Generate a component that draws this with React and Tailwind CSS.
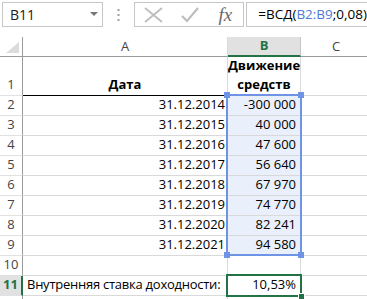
import React from 'react';

const rows = [
  ['31.12.2014', '-300 000'],
  ['31.12.2015', '40 000'],
  ['31.12.2016', '47 600'],
  ['31.12.2017', '56 640'],
  ['31.12.2018', '67 970'],
  ['31.12.2019', '74 770'],
  ['31.12.2020', '82 241'],
  ['31.12.2021', '94 580'],
];

function RowHead({ n, active, tall }) {
  return (
    <div
      className={`flex items-end justify-center pb-[1px] border-b border-[#e1e1e1] ${tall ? 'h-[39px]' : 'h-[20px]'} ${
        active
          ? 'bg-[#e1e1e1] border-r-2 border-r-[#217346] text-[#217346] font-bold'
          : 'border-r border-r-[#9b9b9b] text-[#444]'
      }`}
    >
      {n}
    </div>
  );
}

function Cell({ children, className = '' }) {
  return (
    <div className={`h-[20px] border-r border-b border-[#d9d9d9] flex items-end pb-[1px] whitespace-nowrap ${className}`}>
      {children}
    </div>
  );
}

export default function App() {
  return (
    <div className="w-[367px] h-[299px] overflow-hidden bg-white text-[13px] text-black" style={{ fontFamily: '"Open Sans", sans-serif' }}>
      {/* formula bar */}
      <div className="h-[37px] flex items-start pt-[2px]">
        <div className="ml-[2px] w-[101px] h-[25px] border border-[#c6c6c6] flex items-center justify-between pl-[7px] pr-[4px]">
          <span className="text-[14px] text-[#222]">B11</span>
          <svg width="8" height="5" viewBox="0 0 8 5"><path d="M0 0h8L4 4z" fill="#777" /></svg>
        </div>
        <div className="w-[31px] h-[25px] flex items-center justify-center">
          <svg width="3" height="12" viewBox="0 0 3 12">
            <rect x="0.5" y="0" width="2" height="2" fill="#a0a0a0" />
            <rect x="0.5" y="5" width="2" height="2" fill="#a0a0a0" />
            <rect x="0.5" y="10" width="2" height="2" fill="#a0a0a0" />
          </svg>
        </div>
        <div className="w-[111px] h-[25px] border border-[#c6c6c6] flex items-center">
          <svg className="ml-[9px]" width="19" height="16" viewBox="0 0 19 16">
            <path d="M1 1L18 15M18 1L1 15" stroke="#bdbdbd" strokeWidth="1.8" fill="none" />
          </svg>
          <svg className="ml-[18px]" width="18" height="16" viewBox="0 0 18 16">
            <path d="M1 9L6 14L17 1" stroke="#bdbdbd" strokeWidth="2.2" fill="none" />
          </svg>
          <span className="ml-[20px] text-[19px] italic text-[#6a6a6a] leading-none" style={{ fontFamily: '"Liberation Serif", serif' }}>
            fx
          </span>
        </div>
        <div className="ml-[2px] flex-1 h-[25px] border border-r-0 border-[#c6c6c6] flex items-center pl-[11px] text-[13.5px] whitespace-nowrap">
          <span>=ВСД(</span>
          <span className="text-[#4f7bd6]">B2:B9</span>
          <span>;0,08)</span>
        </div>
      </div>

      {/* sheet */}
      <div className="relative">
        <div className="grid grid-cols-[23px_205px_73px_1fr]">
          {/* column headers */}
          <div className="h-[20px] border-r border-b border-[#9b9b9b] flex items-end justify-end pr-[3px] pb-[3px]">
            <svg width="13" height="11" viewBox="0 0 13 11"><path d="M13 0V11H0z" fill="#dcdcdc" /></svg>
          </div>
          <div className="h-[20px] border-r border-r-[#d9d9d9] border-b border-b-[#9b9b9b] flex items-center justify-center text-[#444]">A</div>
          <div className="h-[20px] border-r border-r-[#c6c6c6] border-b-2 border-b-[#217346] bg-[#e1e1e1] flex items-center justify-center text-[#217346] font-bold">B</div>
          <div className="h-[20px] border-b border-b-[#9b9b9b] flex items-center pl-[31px] text-[#444]">C</div>

          {/* row 1 */}
          <RowHead n="1" tall />
          <div className="h-[39px] border-r border-[#d9d9d9] border-b border-b-black flex items-end justify-center pb-[1px] font-bold">Дата</div>
          <div className="h-[39px] border-r border-b border-[#d9d9d9] flex flex-col items-center justify-end leading-[19px] pb-[1px] font-bold">
            <span>Движение</span>
            <span>средств</span>
          </div>
          <div className="h-[39px] border-b border-[#d9d9d9]" />

          {rows.map(([d, v], i) => (
            <React.Fragment key={d}>
              <RowHead n={i + 2} />
              <Cell className="justify-end pr-[2px]">{d}</Cell>
              <Cell className="justify-end pr-[4px] bg-[#eaf0fb]">{v}</Cell>
              <Cell className="border-r-0" />
            </React.Fragment>
          ))}

          <RowHead n="10" />
          <Cell />
          <Cell />
          <Cell className="border-r-0" />

          <RowHead n="11" active />
          <Cell className="pl-[4px] tracking-[-0.25px]">Внутренняя ставка доходности:</Cell>
          <Cell className="justify-end pr-[4px]">10,53%</Cell>
          <Cell className="border-r-0" />

          <RowHead n="" />
          <Cell />
          <Cell />
          <Cell className="border-r-0" />
        </div>

        {/* reference highlight B2:B9 */}
        <div className="absolute left-[226px] top-[57px] w-[76px] h-[162px] border-2 border-[#6f94e6] pointer-events-none">
          <div className="absolute -left-[4px] -top-[4px] w-[6px] h-[6px] bg-[#6f94e6]" />
          <div className="absolute -right-[4px] -top-[4px] w-[6px] h-[6px] bg-[#6f94e6]" />
          <div className="absolute -left-[4px] -bottom-[4px] w-[6px] h-[6px] bg-[#6f94e6]" />
          <div className="absolute -right-[4px] -bottom-[4px] w-[6px] h-[6px] bg-[#6f94e6]" />
        </div>

        {/* active cell B11 */}
        <div className="absolute left-[226px] top-[237px] w-[76px] h-[23px] border-2 border-[#217346] pointer-events-none">
          <div className="absolute -right-[4px] -bottom-[4px] w-[5px] h-[5px] bg-[#217346] outline outline-1 outline-white" />
        </div>
      </div>
    </div>
  );
}
